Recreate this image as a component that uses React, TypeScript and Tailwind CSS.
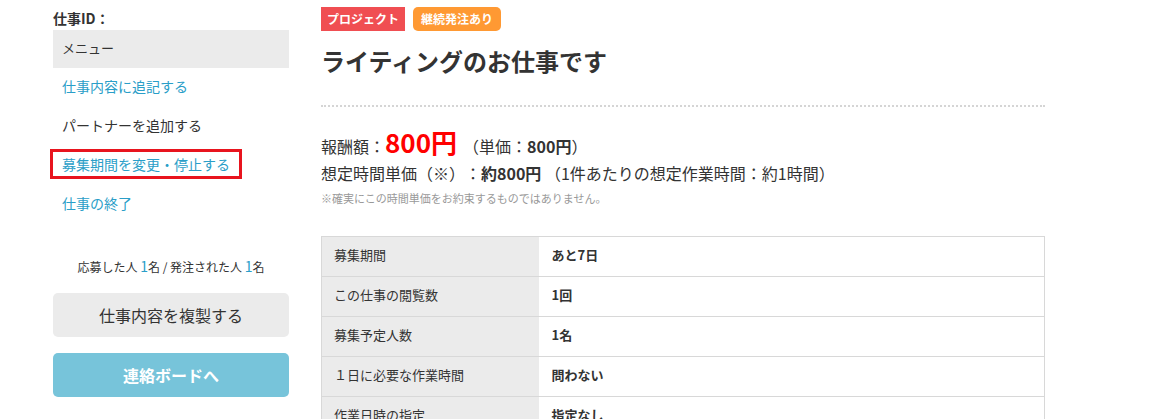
const links = [
  { label: "仕事内容に追記する", color: "text-[#2a9ec8]" },
  { label: "パートナーを追加する", color: "text-[#333333]" },
  { label: "募集期間を変更・停止する", color: "text-[#2a9ec8]", marked: true },
  { label: "仕事の終了", color: "text-[#2a9ec8]" },
];

const rows = [
  ["募集期間", "あと7日"],
  ["この仕事の閲覧数", "1回"],
  ["募集予定人数", "1名"],
  ["１日に必要な作業時間", "問わない"],
  ["作業日時の指定", "指定なし"],
];

function SideMenu() {
  return (
    <aside className="w-[236px] shrink-0">
      <p className="pt-[9px] text-[14px] font-bold leading-[18px] text-[#333]">仕事ID：</p>

      <div className="mt-[3px] flex h-[38px] items-center bg-[#ebebeb] px-[9px] pb-[2px] text-[13px] text-[#333]">
        メニュー
      </div>

      <ul>
        {links.map((l) =>
          l.marked ? (
            <li key={l.label} className="flex h-[39px] items-center pb-[3px]">
              <a
                href="#"
                className={`-ml-[3px] inline-block border-[3px] border-[#e8141e] px-[9px] text-[14px] leading-[24px] ${l.color}`}
              >
                {l.label}
              </a>
            </li>
          ) : (
            <li key={l.label} className="flex h-[39px] items-center pb-[3px] pl-[9px]">
              <a href="#" className={`text-[14px] leading-[24px] ${l.color}`}>
                {l.label}
              </a>
            </li>
          )
        )}
      </ul>

      <p className="mt-[33px] text-center text-[12px] leading-[20px] text-[#333]">
        応募した人 <span className="text-[14px] leading-none text-[#2a9ec8]">1</span>名 / 発注された人{" "}
        <span className="text-[14px] leading-none text-[#2a9ec8]">1</span>名
      </p>

      <button
        type="button"
        className="mt-[16px] flex h-[44px] w-full items-center justify-center rounded-[5px] bg-[#ebebeb] text-[16px] text-[#333]"
      >
        仕事内容を複製する
      </button>

      <button
        type="button"
        className="mt-[16px] flex h-[44px] w-full items-center justify-center rounded-[5px] bg-[#77c4da] text-[16px] font-bold text-white"
      >
        連絡ボードへ
      </button>
    </aside>
  );
}

function JobDetail() {
  return (
    <main className="w-[724px] shrink-0">
      <div className="flex gap-2 pt-[7px]">
        <span className="flex h-[24px] items-center bg-[#f04e52] px-[6px] text-[12px] font-bold text-white">
          プロジェクト
        </span>
        <span className="flex h-[24px] items-center rounded-[5px] bg-[#ff9933] px-[8px] text-[12px] font-bold text-white">
          継続発注あり
        </span>
      </div>

      <h1 className="mt-[14px] text-[24px] font-bold leading-[32px] text-[#333]">ライティングのお仕事です</h1>

      <div className="mt-[28px] border-t-2 border-dotted border-[#d5d5d5]" />

      <p className="mt-[22px] h-[32px] text-[16px] leading-[32px] text-[#333]">
        報酬額：
        <span className="text-[26px] leading-none font-bold text-[#ff0000]">800円</span>
        <span className="ml-[6px]">
          （単価：<span className="font-bold">800円</span>）
        </span>
      </p>

      <p className="h-[24px] text-[16px] leading-[24px] text-[#333]">
        想定時間単価（※）：<span className="font-bold">約800円</span> （1件あたりの想定作業時間：約1時間）
      </p>

      <p className="mt-[4px] h-[18px] text-[11px] leading-[18px] text-[#999]">
        ※確実にこの時間単価をお約束するものではありません。
      </p>

      <table className="mt-[29px] w-full border-collapse border border-[#d8d8d8] text-[13px] text-[#333]">
        <tbody>
          {rows.map(([k, v]) => (
            <tr key={k} className="h-[40px] border-b border-[#d8d8d8]">
              <th className="w-[217px] bg-[#ebebeb] pb-[3px] pl-[12px] text-left font-normal">{k}</th>
              <td className="pb-[3px] pl-[13px] font-bold">{v}</td>
            </tr>
          ))}
        </tbody>
      </table>
    </main>
  );
}

export default function App() {
  return (
    <div className="flex min-h-[419px] gap-[32px] bg-white pl-[53px] font-['Noto_Sans_CJK_JP','Noto_Sans',sans-serif] [text-spacing-trim:space-all]">
      <SideMenu />
      <JobDetail />
    </div>
  );
}
